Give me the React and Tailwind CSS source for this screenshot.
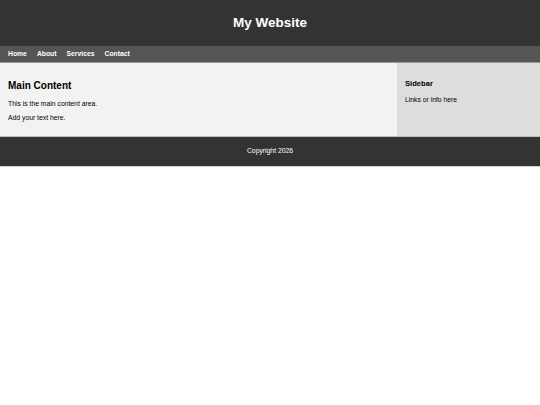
import React from 'react';

const App = () => {
  const links = ['Home', 'About', 'Services', 'Contact'];

  return (
    <div className="bg-white min-h-[405px] font-['Liberation_Sans',Arial,sans-serif]">
      <header className="bg-[#333333] h-[46px] flex items-center justify-center">
        <h1 className="text-white font-bold text-[13.5px] leading-none">My Website</h1>
      </header>

      <nav className="bg-[#555555] h-[17px] border-b border-[#9a9a9a] flex items-center gap-[10px] px-[8px] pt-[1px]">
        {links.map((link) => (
          <a key={link} href="#" className="text-white font-bold text-[6.8px] leading-none">
            {link}
          </a>
        ))}
      </nav>

      <div className="flex h-[74px] border-b border-[#bdbdbd]">
        <main className="flex-1 bg-[#f2f2f2] px-[8px] pt-[18px]">
          <h2 className="text-[10px] font-bold text-black leading-none mb-[10px]">Main Content</h2>
          <p className="text-[6.8px] text-black leading-none mb-[7px]">This is the main content area.</p>
          <p className="text-[6.8px] text-black leading-none">Add your text here.</p>
        </main>
        <aside className="w-[143px] bg-[#dddddd] px-[8px] pt-[17px]">
          <h3 className="text-[7.6px] font-bold text-black leading-none mb-[9px]">Sidebar</h3>
          <p className="text-[6.8px] text-black leading-none">Links or info here</p>
        </aside>
      </div>

      <footer className="bg-[#333333] h-[30px] border-b border-[#d0d0d0] flex items-center justify-center">
        <p className="text-white text-[6.8px] leading-none">Copyright 2026</p>
      </footer>
    </div>
  );
};

export default App;
